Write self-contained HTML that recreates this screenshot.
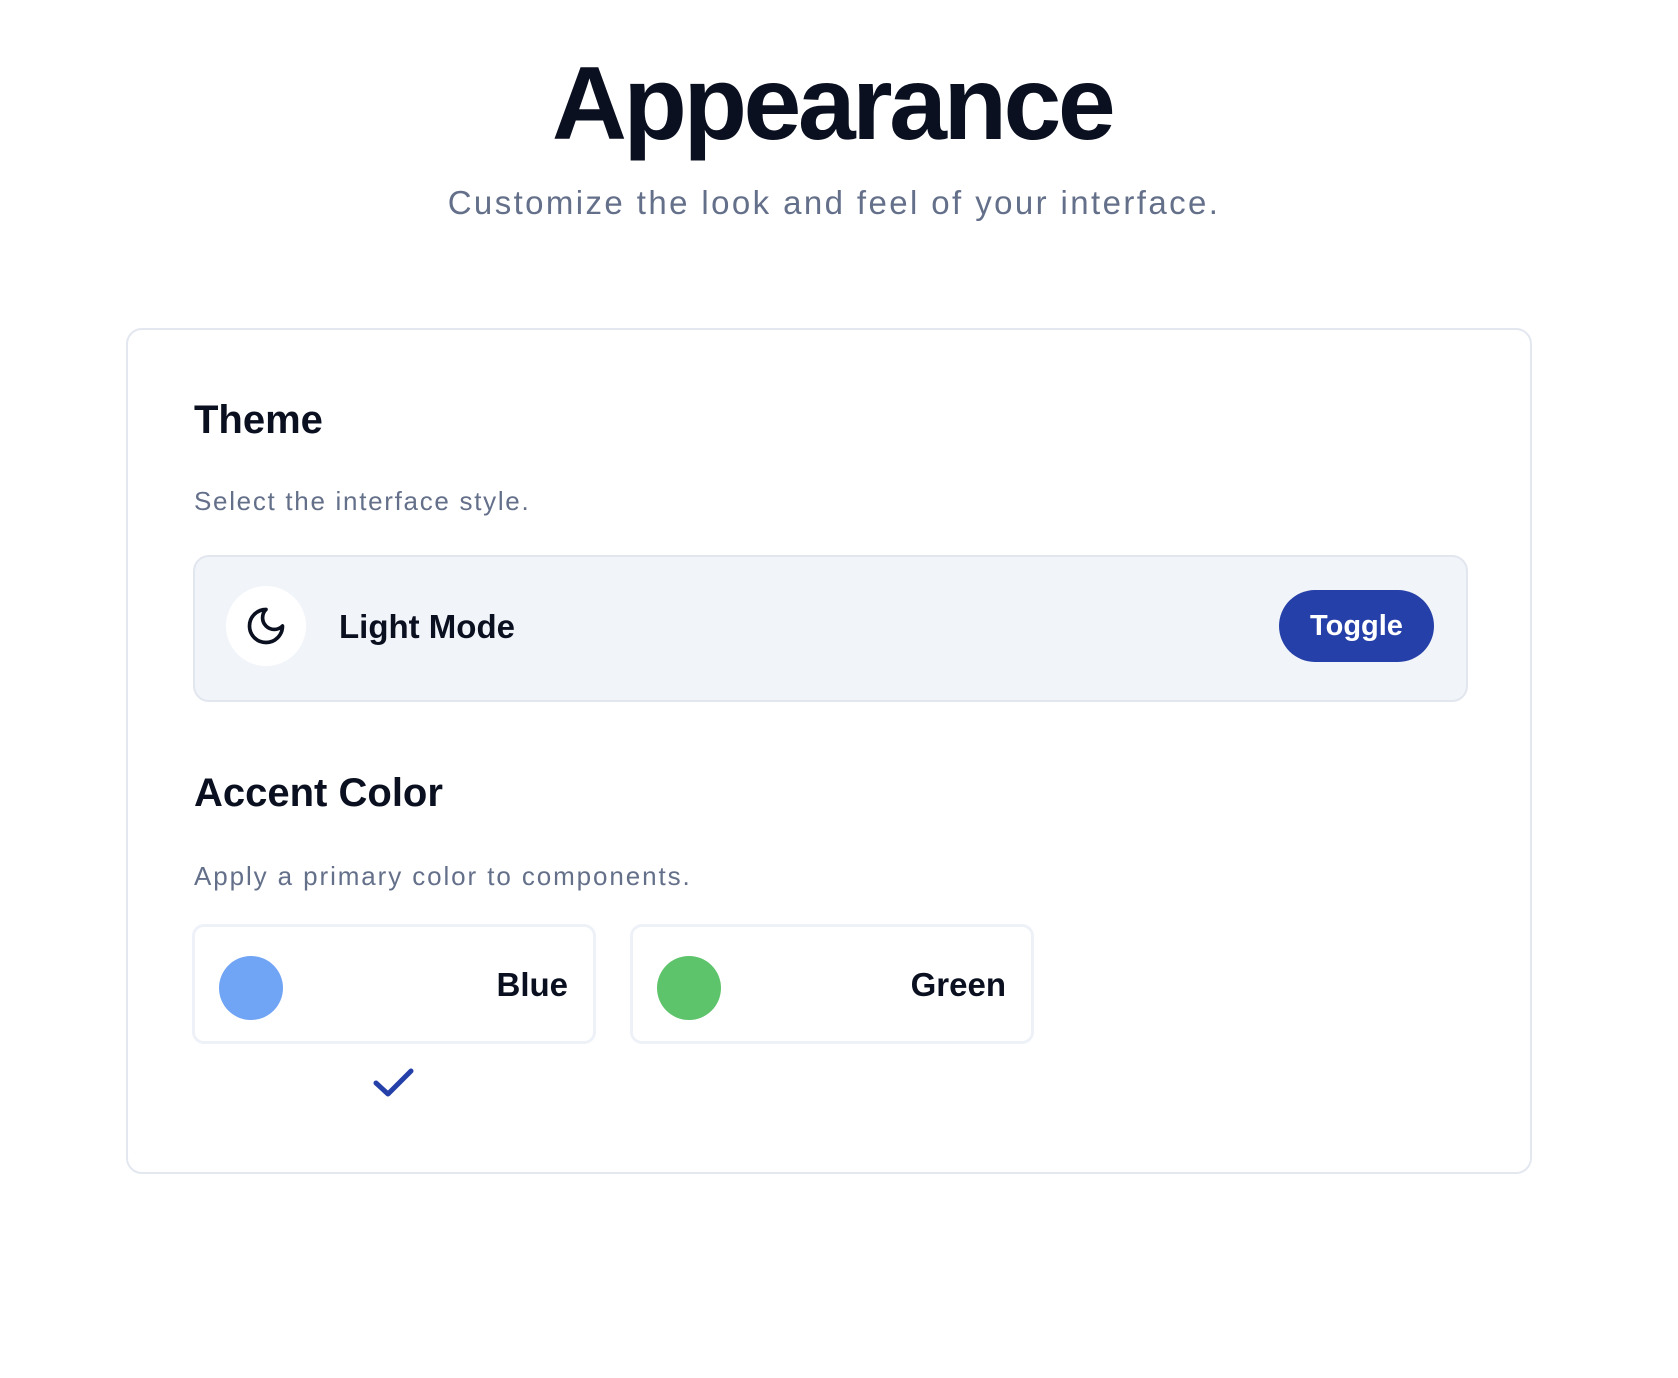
<!DOCTYPE html>
<html><head><meta charset="utf-8"><style>
*{box-sizing:border-box;margin:0;padding:0}
body{width:1678px;height:1378px;background:#fff;font-family:"Liberation Sans",sans-serif;color:#0b1020;position:relative;overflow:hidden}
.abs{position:absolute;white-space:nowrap}
h1{position:absolute;left:0;width:1664px;text-align:center;top:44px;font-size:104px;font-weight:bold;letter-spacing:-3.5px;line-height:120px}
.sub{position:absolute;left:0;width:1668px;text-align:center;top:183px;font-size:33px;letter-spacing:2.4px;color:#64708a;line-height:40px}
.card{position:absolute;left:126px;top:328px;width:1406px;height:846px;border:2px solid #e3e7ef;border-radius:16px}
.h{font-size:40px;font-weight:bold;line-height:48px}
.p{font-size:26px;color:#64708a;line-height:32px}
.panel{position:absolute;left:193px;top:555px;width:1275px;height:147px;background:#f1f4f9;border:2px solid #e2e6ee;border-radius:16px}
.btn{position:absolute;left:1279px;top:590px;width:155px;height:72px;border-radius:36px;background:#2540a8;color:#fff;font-size:29px;font-weight:bold;text-align:center;line-height:72px}
.cc{position:absolute;top:924px;width:404px;height:120px;border:3px solid #eef2f8;border-radius:12px;background:#fff}
.dot{position:absolute;width:64px;height:64px;border-radius:50%;top:29px;left:24px}
.cl{position:absolute;right:25px;top:38px;font-size:33px;font-weight:bold;line-height:40px}
</style></head><body>
<h1>Appearance</h1>
<div class="sub">Customize the look and feel of your interface.</div>
<div class="card"></div>
<div class="abs h" style="left:194px;top:396px">Theme</div>
<div class="abs p" style="left:194px;top:485px;letter-spacing:1.7px">Select the interface style.</div>
<div class="panel"></div>
<div class="abs" style="left:226px;top:586px;width:80px;height:80px;border-radius:50%;background:#fff"></div>
<svg class="abs" style="left:244px;top:604px" width="44" height="44" viewBox="0 0 24 24" fill="none" stroke="#0b1020" stroke-width="2" stroke-linecap="round" stroke-linejoin="round"><path d="M12 3a6 6 0 0 0 9 9 9 9 0 1 1-9-9Z"/></svg>
<div class="abs" style="left:339px;top:607px;font-size:33px;font-weight:bold;line-height:40px">Light Mode</div>
<div class="btn">Toggle</div>
<div class="abs h" style="left:194px;top:769px">Accent Color</div>
<div class="abs p" style="left:194px;top:860px;letter-spacing:1.9px">Apply a primary color to components.</div>
<div class="cc" style="left:192px"><div class="dot" style="background:#70a4f5"></div><div class="cl">Blue</div></div>
<div class="cc" style="left:630px"><div class="dot" style="background:#5ec46b"></div><div class="cl">Green</div></div>
<svg class="abs" style="left:370px;top:1065px" width="48" height="36" viewBox="0 0 48 36"><path d="M6 18 L18 29 L41 6" fill="none" stroke="#2540a8" stroke-width="5" stroke-linecap="round" stroke-linejoin="round"/></svg>
</body></html>
